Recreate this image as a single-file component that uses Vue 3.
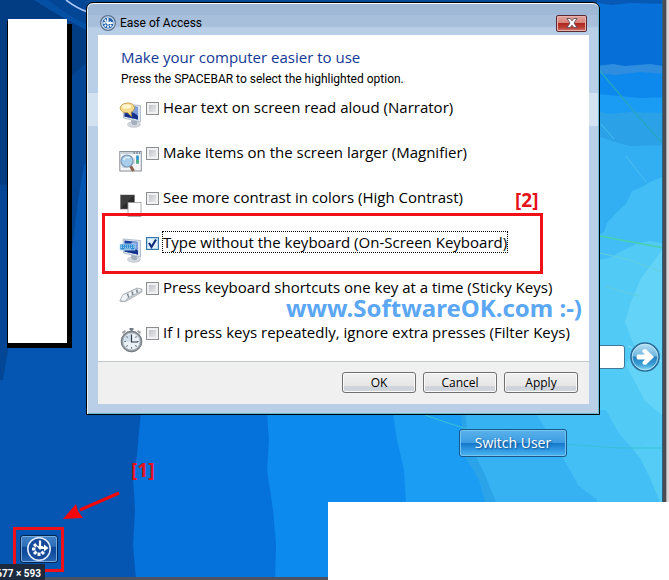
<script setup>
import { reactive, ref } from 'vue'

const options = reactive([
  { id: 'narrator', label: 'Hear text on screen read aloud (Narrator)', checked: false },
  { id: 'magnifier', label: 'Make items on the screen larger (Magnifier)', checked: false },
  { id: 'contrast', label: 'See more contrast in colors (High Contrast)', checked: false },
  { id: 'keyboard', label: 'Type without the keyboard (On-Screen Keyboard)', checked: true },
  { id: 'sticky', label: 'Press keyboard shortcuts one key at a time (Sticky Keys)', checked: false },
  { id: 'filter', label: 'If I press keys repeatedly, ignore extra presses (Filter Keys)', checked: false },
])
const highlighted = ref('keyboard')
const password = ref('')
const ticks = [0, 45, 90, 135, 180, 225, 270, 315]
</script>

<template>
  <main class="desktop">
    <svg class="wallpaper" viewBox="0 0 669 580" preserveAspectRatio="none" aria-hidden="true">
      <rect width="669" height="580" fill="#0456b2" />
      <path d="M0 0H100V150L84 165L78 200L72 250V345H8V350L3 380H0Z" fill="#024695" />
      <path d="M0 0H38Q62 16 90 32V60L72 75V185H0Z" fill="#023c83" />
      <path d="M34 0H48Q68 16 90 26V32Q62 18 34 0Z" fill="#0450a5" />
      <path d="M66 0Q78 9 88 12" fill="none" stroke="#a9c6f5" stroke-width="1.6" />
      <path d="M142 400L139 432L137 455L133 478L135 510L133 545L136 580H330V400Z" fill="#0571da" />
      <path d="M266 400L269 440L267 470L273 510L276 545L275 580H420V400Z" fill="#0d8aee" />
      <path d="M391 400L397 440L404 470L406 502H510V400Z" fill="#1b9df4" />
      <path d="M460 400L464 455L479 480L485 502H560V400Z" fill="#2ba3e9" />
      <path d="M464 400L468 440L485 475L496 502H669V400Z" fill="#36b2f2" />
      <path d="M528 400L546 430L570 470L578 485L600 502H669V400Z" fill="#43bff5" />
      <path d="M594 400L612 425L634 460L656 502H669V400Z" fill="#55ccf6" />
      <path d="M86 0H669V3H86Z" fill="#064b96" />
      <path d="M597 0H669V70H597Z" fill="#0670d8" />
      <path d="M597 0H669V4L630 3L612 5L597 3Z" fill="#0659b5" />
      <path d="M597 66L613 64L625 66L650 64L669 67V110H597Z" fill="#2f8ddf" />
      <path d="M597 73L615 75L640 72L669 74V120H597Z" fill="#0d89ee" />
      <path d="M597 94L620 96L640 98L669 97V130H597Z" fill="#1a9cf4" />
      <path d="M597 111L610 114L630 112L669 113V160H597Z" fill="#2ba1e8" />
      <path d="M597 136L615 142L630 146L669 145V340H597Z" fill="#31aff2" />
      <path d="M669 174L650 182L642 187L632 191L626 204L618 211L607 223L604 232L597 236V345H669Z" fill="#42bdf5" />
      <path d="M669 244L650 241L638 243L620 252L610 258L597 260V460H622L650 440H669Z" fill="#52caf6" />
      <path d="M662 250L640 280L631 302L625 322L635 348L626 365L635 382L645 401L662 415Z" fill="#63d4f7" />
      <path d="M597 410H606L618 432L640 458L650 478L660 502H597Z" fill="#43bff5" />
      <path d="M600 71L637 115L664 145" fill="none" stroke="#25a6c3" stroke-width="1.3" />
      <path d="M600 236L664 248" fill="none" stroke="#48d0ae" stroke-width="1.5" />
      <path d="M600 253L630 260L664 273M606 287L640 296" fill="none" stroke="#63cfdc" />
      <path d="M601 124L614 139M626 156L646 182M655 188L664 201" fill="none" stroke="#4bbcf2" />
      <path d="M425 415L448 423L480 433L560 444L620 448H664" fill="none" stroke="#39bfd5" stroke-width="1.2" />
      <path d="M628 346L664 362" fill="none" stroke="#8ce0fa" />
      <rect y="577" width="330" height="3" fill="#4b5261" />
      <rect x="662" width="1" height="502" fill="#2b6180" />
      <rect x="663" width="3" height="502" fill="#4b4d52" />
      <rect x="666" width="1" height="502" fill="#a8a5a7" />
      <rect x="667" width="2" height="502" fill="#dad7d9" />
      <rect x="328" y="502" width="341" height="78" fill="#fff" />
    </svg>

    <div class="blank-panel"></div>

    <form class="login" @submit.prevent>
      <input v-model="password" type="password" class="password" aria-label="Password" />
      <button class="go" aria-label="Log on">
        <svg viewBox="0 0 30 30" width="30" height="30">
          <defs>
            <linearGradient id="orb" x2="0" y2="1">
              <stop offset="0" stop-color="#b9e2f5" />
              <stop offset=".46" stop-color="#6fb7df" />
              <stop offset=".5" stop-color="#2681bf" />
              <stop offset=".75" stop-color="#389bd3" />
              <stop offset="1" stop-color="#8be2fa" />
            </linearGradient>
          </defs>
          <circle cx="15" cy="15" r="14" fill="url(#orb)" stroke="#2b6b98" stroke-width="1.6" />
          <circle cx="15" cy="15" r="12.8" fill="none" stroke="#c3eafa" stroke-width=".8" />
          <path d="M7.5 12.5H15L12.5 10Q11.8 7.8 14 7.3H16L24 15L16 22.7H14Q11.8 22 12.5 20L15 17.5H7.5Q5.5 15 7.5 12.5Z" fill="#fff" />
        </svg>
      </button>
    </form>

    <button class="switch-user">Switch User</button>

    <section class="dialog" role="dialog" aria-labelledby="dialog-title">
      <header class="titlebar">
        <svg viewBox="0 0 16 16" width="16" height="16" aria-hidden="true">
          <circle cx="8" cy="8" r="7.4" fill="#c3d3e4" stroke="#59718f" stroke-width="1.2" />
          <circle cx="8" cy="8" r="5.9" fill="#1f60ad" stroke="#eef4fa" stroke-width=".7" />
          <g stroke="#fff" stroke-width="1.7">
            <path v-for="t in ticks.slice(2)" :key="t" d="M8 3.2V5.4" :transform="`rotate(${t} 8 8)`" />
          </g>
          <path d="M7.8 3V8.3H12.5M5.6 6.6L8 9L10.6 6.6" fill="none" stroke="#fff" stroke-width="1.4" />
        </svg>
        <span id="dialog-title" class="title">Ease of Access</span>
        <button class="close" aria-label="Close">
          <svg viewBox="0 0 12 10" width="12" height="10">
            <path d="M1 .5H4.2L6 2.8L7.8 .5H11L8 5L11 9.5H7.8L6 7.2L4.2 9.5H1L4 5Z" fill="#fff" stroke="#5c4a5c" stroke-width=".9" />
          </svg>
        </button>
      </header>

      <form class="content" @submit.prevent>
        <div class="body">
          <h1>Make your computer easier to use</h1>
          <p>Press the SPACEBAR to select the highlighted option.</p>
          <ul>
            <li v-for="o in options" :key="o.id">
              <svg class="icon" viewBox="0 0 24 26" width="24" height="26" aria-hidden="true">
                <g v-if="o.id === 'narrator' || o.id === 'keyboard'">
                  <ellipse cx="15" cy="22.5" rx="6.5" ry="2.8" fill="#d4d9df" stroke="#a9b1bb" stroke-width=".6" />
                  <path d="M12 18L18 19V22.5Q15 24 12.5 22Z" fill="#a5afbb" />
                  <path d="M4 2L21.5 3.5V20L4.5 16Z" fill="#dbe3ec" stroke="#9baaba" stroke-width=".7" />
                  <path d="M5.5 3.5L19 5V17.5L5.5 14.5Z" fill="#173f9f" />
                  <path d="M13 4.3L19 5V17.5L10 15.5Z" fill="#7d9cdb" />
                  <path d="M6 11Q13 8 19 14V17.5L5.5 14.5Z" fill="#14328c" />
                  <g v-if="o.id === 'narrator'">
                    <path d="M7 1.2C12 .2 16 3 15.5 6.5Q15 9 12 10L12.5 14.5L8.5 10.7C3 11 .7 8 1.3 5Q2.4 2 7 1.2Z" fill="#f7dc8d" stroke="#b9943f" stroke-width=".8" />
                    <ellipse cx="7.5" cy="4.5" rx="4.5" ry="2.2" fill="#fff6d2" />
                  </g>
                  <g v-else>
                    <rect x="1" y="7" width="15" height="6" fill="#2f8bd0" stroke="#c5e6fb" stroke-width=".8" />
                    <path d="M2 8.8H15.4M2 10.4H15.4" stroke="#c5e8ff" stroke-width=".8" stroke-dasharray="1 1" />
                    <path d="M5 12H12" stroke="#e6f7ff" stroke-width=".7" />
                  </g>
                </g>
                <g v-else-if="o.id === 'magnifier'">
                  <rect x=".8" y="4.5" width="21.5" height="19.5" fill="#f2f4f5" stroke="#8a9096" />
                  <path d="M1.3 5H22V7H1.3Z" fill="#cbd3da" />
                  <path d="M14.5 6H16M17.2 6H18.7M20 6H21" stroke="#33496b" stroke-width="1" />
                  <path d="M3.5 9.5H13M13.5 12H16M13.5 14H16M13.5 16H16M3 20H9" stroke="#aab6c2" stroke-width=".8" />
                  <rect x="17.2" y="8.5" width="2.6" height="8" fill="#278fc9" />
                  <rect x="17.2" y="13" width="2.6" height="3.5" fill="#4fb477" />
                  <path d="M11.5 19L14.5 24" stroke="#8b5f49" stroke-width="3" />
                  <circle cx="8" cy="14" r="6" fill="#a6cdec" stroke="#7f98b2" stroke-width="1.2" />
                  <path d="M4.5 13Q6.5 9 11 11" fill="none" stroke="#eef8ff" stroke-width="1.3" />
                </g>
                <g v-else-if="o.id === 'contrast'">
                  <rect x="1.5" y="3" width="14" height="14" fill="#2a2a2a" stroke="#777" stroke-width=".6" />
                  <path d="M2 3.5H15L2 16Z" fill="#3d3d3d" />
                  <rect x="9" y="10.5" width="13" height="14" fill="#fff" stroke="#979797" stroke-width=".8" />
                </g>
                <g v-else-if="o.id === 'sticky'" stroke="#a1a8ae" stroke-width=".6">
                  <path d="M1 18.5L4 12.5L18 6L23 7V10L7 19.5H1Z" fill="#c2c9ce" />
                  <path d="M4 12.5L8 11.5L9.5 15L6 19.3L1 18.5Z" fill="#eef2f5" />
                  <path d="M9 10.5L12.5 9L13.2 13.5L10 15.5Z" fill="#f3f6f8" />
                  <path d="M13.7 8.5L17 7L17.7 11L14.5 13Z" fill="#f3f6f8" />
                  <path d="M18.2 6.3L22 7L22.4 9L19 10.5Z" fill="#f3f6f8" />
                  <path d="M8.5 12L9.7 15.5M13.2 10L14 13M17.6 8L18.4 10.7" stroke="#68737c" stroke-width=".9" />
                </g>
                <g v-else>
                  <path d="M10.5 1H14.5V3H13.5V5H11.5V3H10.5Z" fill="#737a82" />
                  <path d="M3 5L6 3L7 4.5L4 7ZM19 3L22 5L21 7L18 4.5Z" fill="#9ba1a7" />
                  <circle cx="12.5" cy="14.5" r="10.4" fill="#899098" stroke="#565d65" stroke-width=".7" />
                  <circle cx="12.5" cy="14.5" r="8.5" fill="#e9f0f6" stroke="#b8c0c8" />
                  <path d="M5 15A7.5 7.5 0 0 1 12.5 7V14.5Z" fill="#d0ddea" />
                  <path v-for="t in ticks" :key="t" d="M12.5 7.3V9" stroke="#64707c" :transform="`rotate(${t} 12.5 14.5)`" />
                  <path d="M12.5 8V15H19" fill="none" stroke="#2d3640" stroke-width="1.1" />
                </g>
              </svg>
              <span class="box">
                <input :id="o.id" v-model="o.checked" type="checkbox" @focus="highlighted = o.id" />
                <svg v-if="o.checked" viewBox="0 0 13 13" width="13" height="13" aria-hidden="true">
                  <path d="M3 6L5.5 10L10 2.5" fill="none" stroke="#132c79" stroke-width="2.2" />
                </svg>
              </span>
              <label :for="o.id" :class="{ focused: highlighted === o.id }">{{ o.label }}</label>
            </li>
          </ul>
        </div>
        <footer>
          <button>OK</button>
          <button>Cancel</button>
          <button>Apply</button>
        </footer>
      </form>
    </section>

    <div class="watermark">www.SoftwareOK.com :-)</div>
    <div class="frame frame-option"></div>
    <div class="frame frame-button"></div>
    <span class="step step-two">[2]</span>
    <span class="step step-one">[1]</span>
    <svg class="arrow" viewBox="0 0 60 32" width="60" height="32" aria-hidden="true">
      <path d="M57 3L18 20" stroke="#f60707" stroke-width="3" />
      <path d="M1 29L14 14L16 21L21 28Z" fill="#f60707" />
    </svg>

    <button class="ease" aria-label="Ease of Access">
      <svg viewBox="0 0 26 26" width="26" height="26">
        <circle cx="13" cy="13" r="11.2" fill="#174b9a" stroke="#e9effa" stroke-width="1.5" />
        <g stroke="#fff" stroke-width="3">
          <path v-for="t in ticks.slice(3)" :key="t" d="M13 6V9.4" :transform="`rotate(${t} 13 13)`" />
        </g>
        <path d="M14 4.5V12H20" fill="none" stroke="#fff" stroke-width="2.2" />
        <path d="M10.5 10H17.5L14 14ZM18 8.5L22.5 12L18 15.5Z" fill="#fff" />
      </svg>
    </button>
    <div class="size-badge"><span>677 × 593</span></div>
  </main>
</template>

<style>
body {
  margin: 0;
}
</style>

<style scoped>
.desktop {
  position: relative;
  min-height: 100vh;
  overflow: hidden;
  font-family: "Segoe UI", "Open Sans", "Noto Sans", sans-serif;
  font-size: 12px;
  color: #000;
}
.desktop * {
  box-sizing: border-box;
}
button {
  font: inherit;
  padding: 0;
}
svg {
  display: block;
}
.wallpaper {
  position: absolute;
  inset: 0;
  width: 100%;
  height: 100%;
}
.blank-panel {
  position: absolute;
  left: 8px;
  top: 19px;
  width: 59px;
  height: 324px;
  background: #fff;
  box-shadow: -1px 2px #000, 5px 5px #000, 2px 5px #000, -1px 5px #000;
}
.login {
  position: absolute;
  right: 9px;
  top: 342px;
  display: flex;
  align-items: center;
  gap: 5px;
}
.password {
  width: 160px;
  height: 24px;
  border: 1px solid #40789a;
  border-radius: 3px;
  background: #fff;
}
.go {
  border: 0;
  background: none;
}
.switch-user {
  position: absolute;
  right: 102px;
  top: 429px;
  width: 108px;
  height: 28px;
  border: 1px solid #17588c;
  border-radius: 3px;
  background: linear-gradient(#5bb2ea, #3c9ce2 50%, #1578cb 52%, #2f97e2 75%, #4ab6f0);
  box-shadow: inset 0 0 0 1px #78c4f0;
  color: #fff;
  font-size: 14px;
  line-height: 20px;
  text-shadow: 1px 1px 2px #164f86;
}
.dialog {
  position: absolute;
  left: 86px;
  right: 69px;
  top: 2px;
  padding: 0 10px 10px 11px;
  border: 1px solid #000;
  border-radius: 7px 7px 0 0;
  background:
    linear-gradient(#d3e2f1, #d3e2f1) 0 90px / 100% 33px no-repeat,
    linear-gradient(#9fb8d5 0 12px, #a8bfdb 12px 23px, #b9cfe8 25px);
  box-shadow: inset 0 1px #fff, inset 1px 0 #e8f2fa, inset -1px -1px #62bdd0;
}
.titlebar {
  display: flex;
  align-items: center;
  gap: 4px;
  height: 32px;
  padding: 8px 2px 0;
}
.title {
  flex: 1;
  font-family: "Segoe UI", Roboto, sans-serif;
}
.close {
  display: grid;
  place-items: center;
  width: 31px;
  height: 17px;
  border: 1px solid #5b2b35;
  border-radius: 2px;
  background: linear-gradient(#e0a49d, #d68279 48%, #b3261d 50%, #bb4338 80%, #d2837a);
  box-shadow: inset 0 0 0 1px #e7b3ab;
}
.content {
  margin: 0;
  background: #fff;
}
.body {
  padding: 10px 12px 0 21px;
}
h1 {
  margin: 0;
  padding-left: 2px;
  color: #143795;
  font-size: 15px;
  font-weight: 400;
  line-height: 24px;
}
p {
  margin: 0;
  padding: 1px 2px 8px;
  font-family: "Segoe UI", Roboto, sans-serif;
  line-height: 18px;
}
ul {
  margin: 0;
  padding: 0;
  list-style: none;
}
li {
  display: flex;
  align-items: flex-start;
  gap: 3px;
  height: 45px;
}
li:last-child {
  height: 40px;
}
.icon {
  margin-top: 6px;
}
.box {
  display: grid;
  margin-top: 6px;
}
.box > * {
  grid-area: 1 / 1;
}
.box svg {
  pointer-events: none;
  z-index: 1;
}
.box input {
  appearance: none;
  width: 13px;
  height: 13px;
  margin: 0;
  border: 1px solid #8b8d90;
  background: linear-gradient(135deg, #b4b9c1, #f4f4f4);
  box-shadow: inset 0 0 0 2px #f1f1f1;
}
.box input:checked {
  border-color: #3a75a8;
  background: #e3f4fd;
  box-shadow: inset 0 0 0 1px #b4dcf4;
}
label {
  height: 22px;
  border: 1px solid transparent;
  font-size: 15px;
  line-height: 20px;
  white-space: nowrap;
}
label.focused {
  border: 1px dotted #000;
}
footer {
  display: flex;
  justify-content: flex-end;
  gap: 7px;
  padding: 10px 11px 11px;
  border-top: 1px solid #c0c6d0;
  background: #f0f0f0;
}
footer button {
  width: 74px;
  height: 21px;
  border: 1px solid #707070;
  border-radius: 3px;
  background: linear-gradient(#f0f0f0, #e6e6e6 68%, #cdd2d9 72%, #d3d7dd);
  box-shadow: inset 0 0 0 1px #fafafa;
  line-height: 18px;
}
.watermark {
  position: absolute;
  right: 87px;
  top: 293px;
  color: #5ba7f3;
  font-family: "Comic Sans MS", "Noto Sans", sans-serif;
  font-size: 24px;
  font-weight: 700;
  line-height: 30px;
  white-space: nowrap;
}
.frame {
  position: absolute;
  border: 3px solid #f01018;
  pointer-events: none;
}
.frame-option {
  left: 102px;
  right: 126px;
  top: 213px;
  height: 61px;
}
.frame-button {
  left: 13px;
  top: 527px;
  width: 51px;
  height: 45px;
}
.step {
  position: absolute;
  color: #e81018;
  font-family: Tahoma, "Noto Sans", sans-serif;
  font-size: 19px;
  font-weight: 700;
  line-height: 20px;
}
.step-two {
  left: 515px;
  top: 190px;
}
.step-one {
  left: 131px;
  top: 460px;
}
.arrow {
  position: absolute;
  left: 62px;
  top: 490px;
}
.ease {
  position: absolute;
  left: 20px;
  top: 535px;
  display: grid;
  place-items: center;
  width: 38px;
  height: 28px;
  border: 1px solid #04254f;
  border-radius: 3px;
  background: linear-gradient(#4183c9, #2c6db8 40%, #0c489a 42%, #0f4d9f 65%, #2968b4);
  box-shadow: inset 0 0 0 1px #79aadd;
}
.size-badge {
  position: absolute;
  left: 0;
  bottom: 0;
  display: flex;
  justify-content: flex-end;
  width: 45px;
  height: 16px;
  padding-right: 4px;
  overflow: hidden;
  background: #1c2a40;
  color: #fff;
  font-family: "Roboto", sans-serif;
  font-size: 10px;
  font-weight: 700;
  line-height: 19px;
}
.size-badge span {
  flex: none;
}
</style>
